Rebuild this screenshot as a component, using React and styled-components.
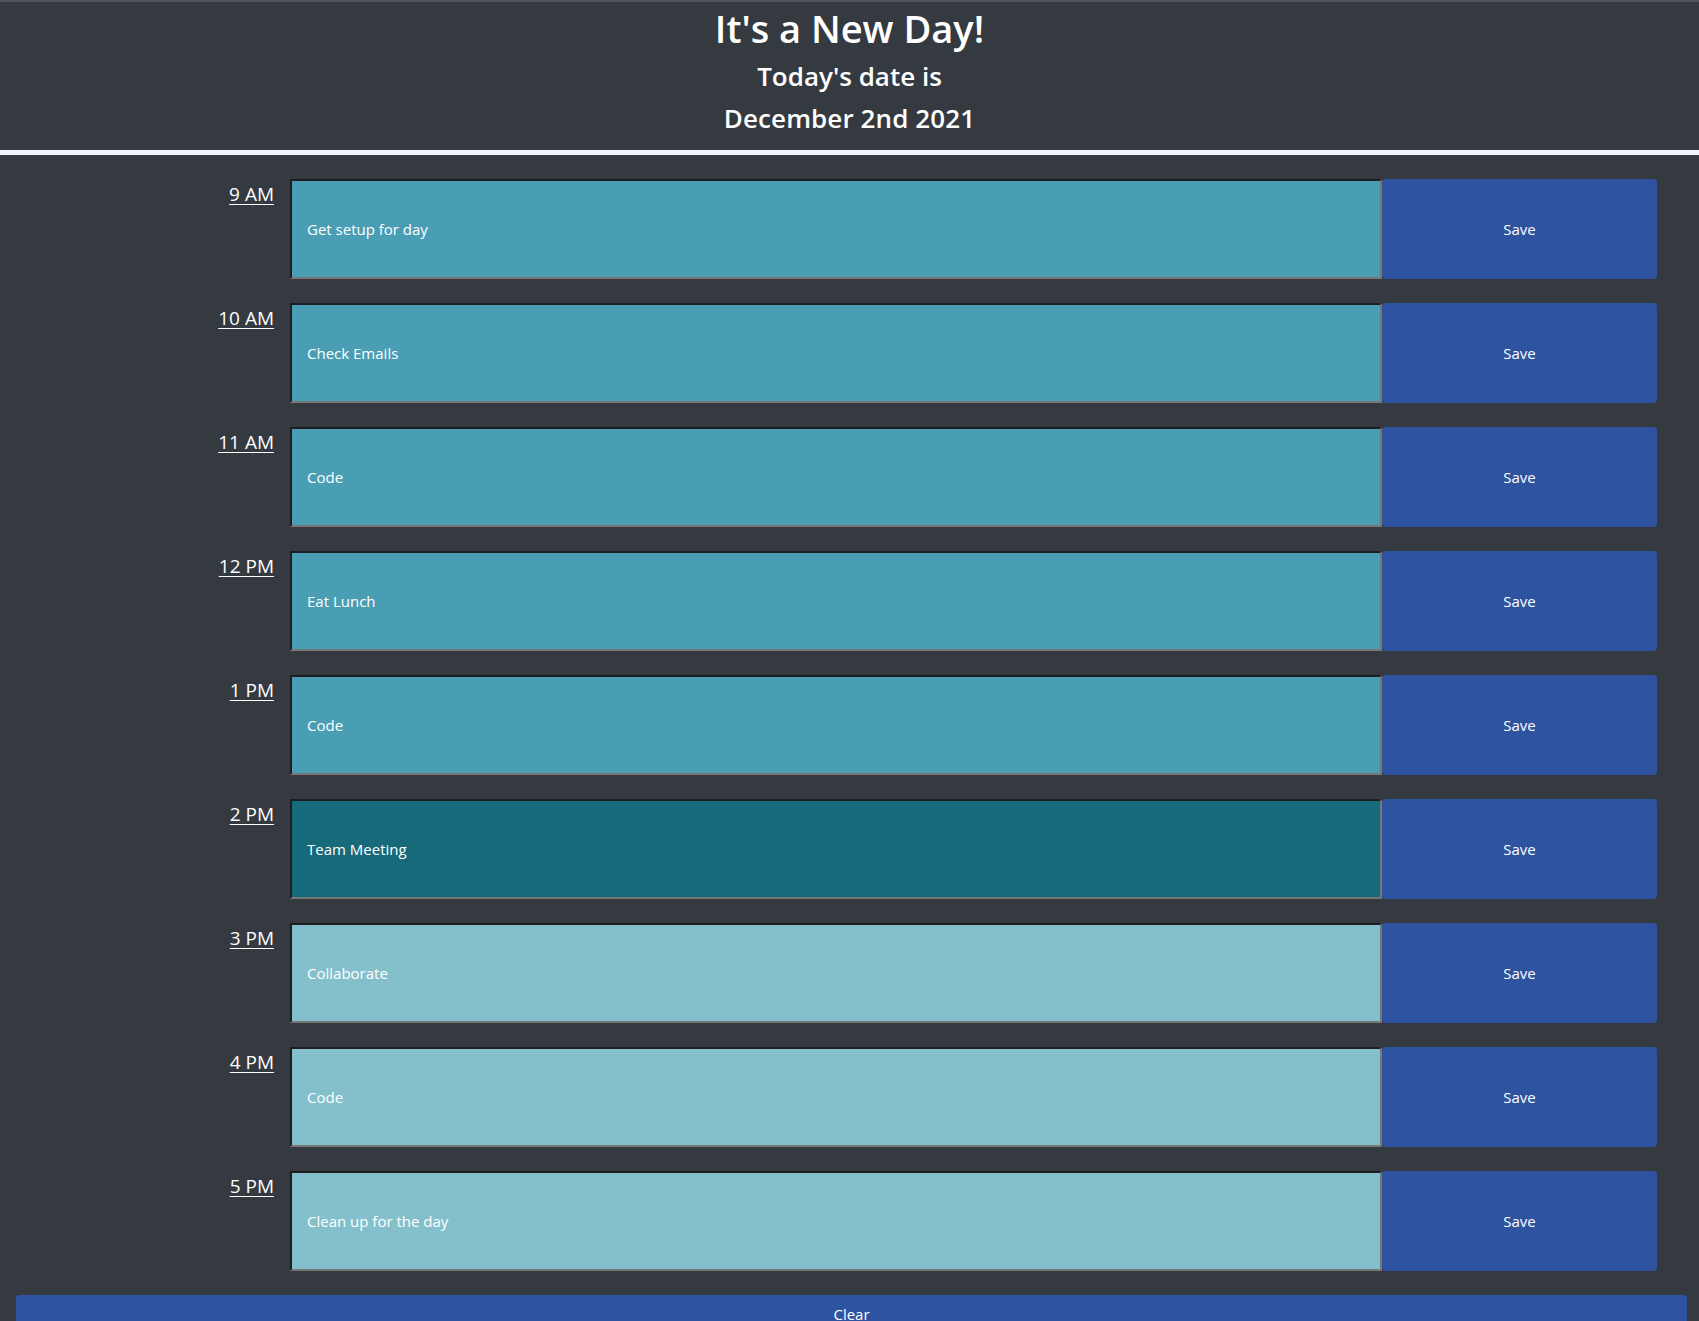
import styled, { createGlobalStyle } from "styled-components";

const hours = [
  { label: "9 AM", text: "Get setup for day", state: "past" },
  { label: "10 AM", text: "Check Emails", state: "past" },
  { label: "11 AM", text: "Code", state: "past" },
  { label: "12 PM", text: "Eat Lunch", state: "past" },
  { label: "1 PM", text: "Code", state: "past" },
  { label: "2 PM", text: "Team Meeting", state: "present" },
  { label: "3 PM", text: "Collaborate", state: "future" },
  { label: "4 PM", text: "Code", state: "future" },
  { label: "5 PM", text: "Clean up for the day", state: "future" },
];

const slotColors = {
  past: "#499eb4",
  present: "#176a7a",
  future: "#84c0cb",
};

const App = () => {
  return (
    <>
      <GlobalStyle />
      <Header>
        <Title>It's a New Day!</Title>
        <Subtitle>Today's date is</Subtitle>
        <Subtitle>December 2nd 2021</Subtitle>
      </Header>
      <Main>
        {hours.map((h) => (
          <TimeBlock key={h.label}>
            <Hour>{h.label}</Hour>
            <Description $state={h.state} defaultValue={h.text} />
            <SaveBtn>Save</SaveBtn>
          </TimeBlock>
        ))}
        <ClearBtn>Clear</ClearBtn>
      </Main>
    </>
  );
};

const GlobalStyle = createGlobalStyle`
  html {
    overflow: hidden;
  }
  body {
    margin: 0;
    background: #343a40;
    color: #fff;
    font-family: "Open Sans", "Noto Sans", sans-serif;
  }
`;

const Header = styled.header`
  border-top: 2px solid #505356;
  border-bottom: 5px solid #f1f4f9;
  padding: 2px 0 11px;
  text-align: center;
`;

const Title = styled.h1`
  margin: 0 0 3px;
  font-size: 38px;
  font-weight: 600;
  line-height: 48px;
`;

const Subtitle = styled.p`
  margin: 0;
  font-size: 26px;
  font-weight: 600;
  line-height: 42px;

  & + & {
    letter-spacing: 0.1px;
  }
`;

const Main = styled.main`
  padding: 24px 12px 0 16px;
`;

const TimeBlock = styled.div`
  display: grid;
  grid-template-columns: 274px 1092px 275px;
  height: 100px;
  margin-bottom: 24px;
`;

const Hour = styled.div`
  padding-right: 16px;
  text-align: right;
  font-size: 19px;
  line-height: 30px;
  text-decoration: underline;
  text-underline-offset: 3px;
`;

const Description = styled.textarea`
  box-sizing: border-box;
  height: 100px;
  margin: 0;
  padding: 36px 15px 0;
  border: 2px solid;
  border-color: #1e1e1e #767676 #767676 #1e1e1e;
  background: ${(p) => slotColors[p.$state]};
  color: #fff;
  font-family: inherit;
  font-size: 15px;
  line-height: 24px;
  resize: none;
  outline: none;
`;

const SaveBtn = styled.button`
  height: 100px;
  border: none;
  border-radius: 4px;
  background: #2e53a0;
  color: #fff;
  font-family: inherit;
  font-size: 15px;
`;

const ClearBtn = styled.button`
  display: block;
  width: 1671px;
  height: 38px;
  border: none;
  border-radius: 4px;
  background: #2e53a0;
  color: #fff;
  font-family: inherit;
  font-size: 15px;
`;

export default App;
